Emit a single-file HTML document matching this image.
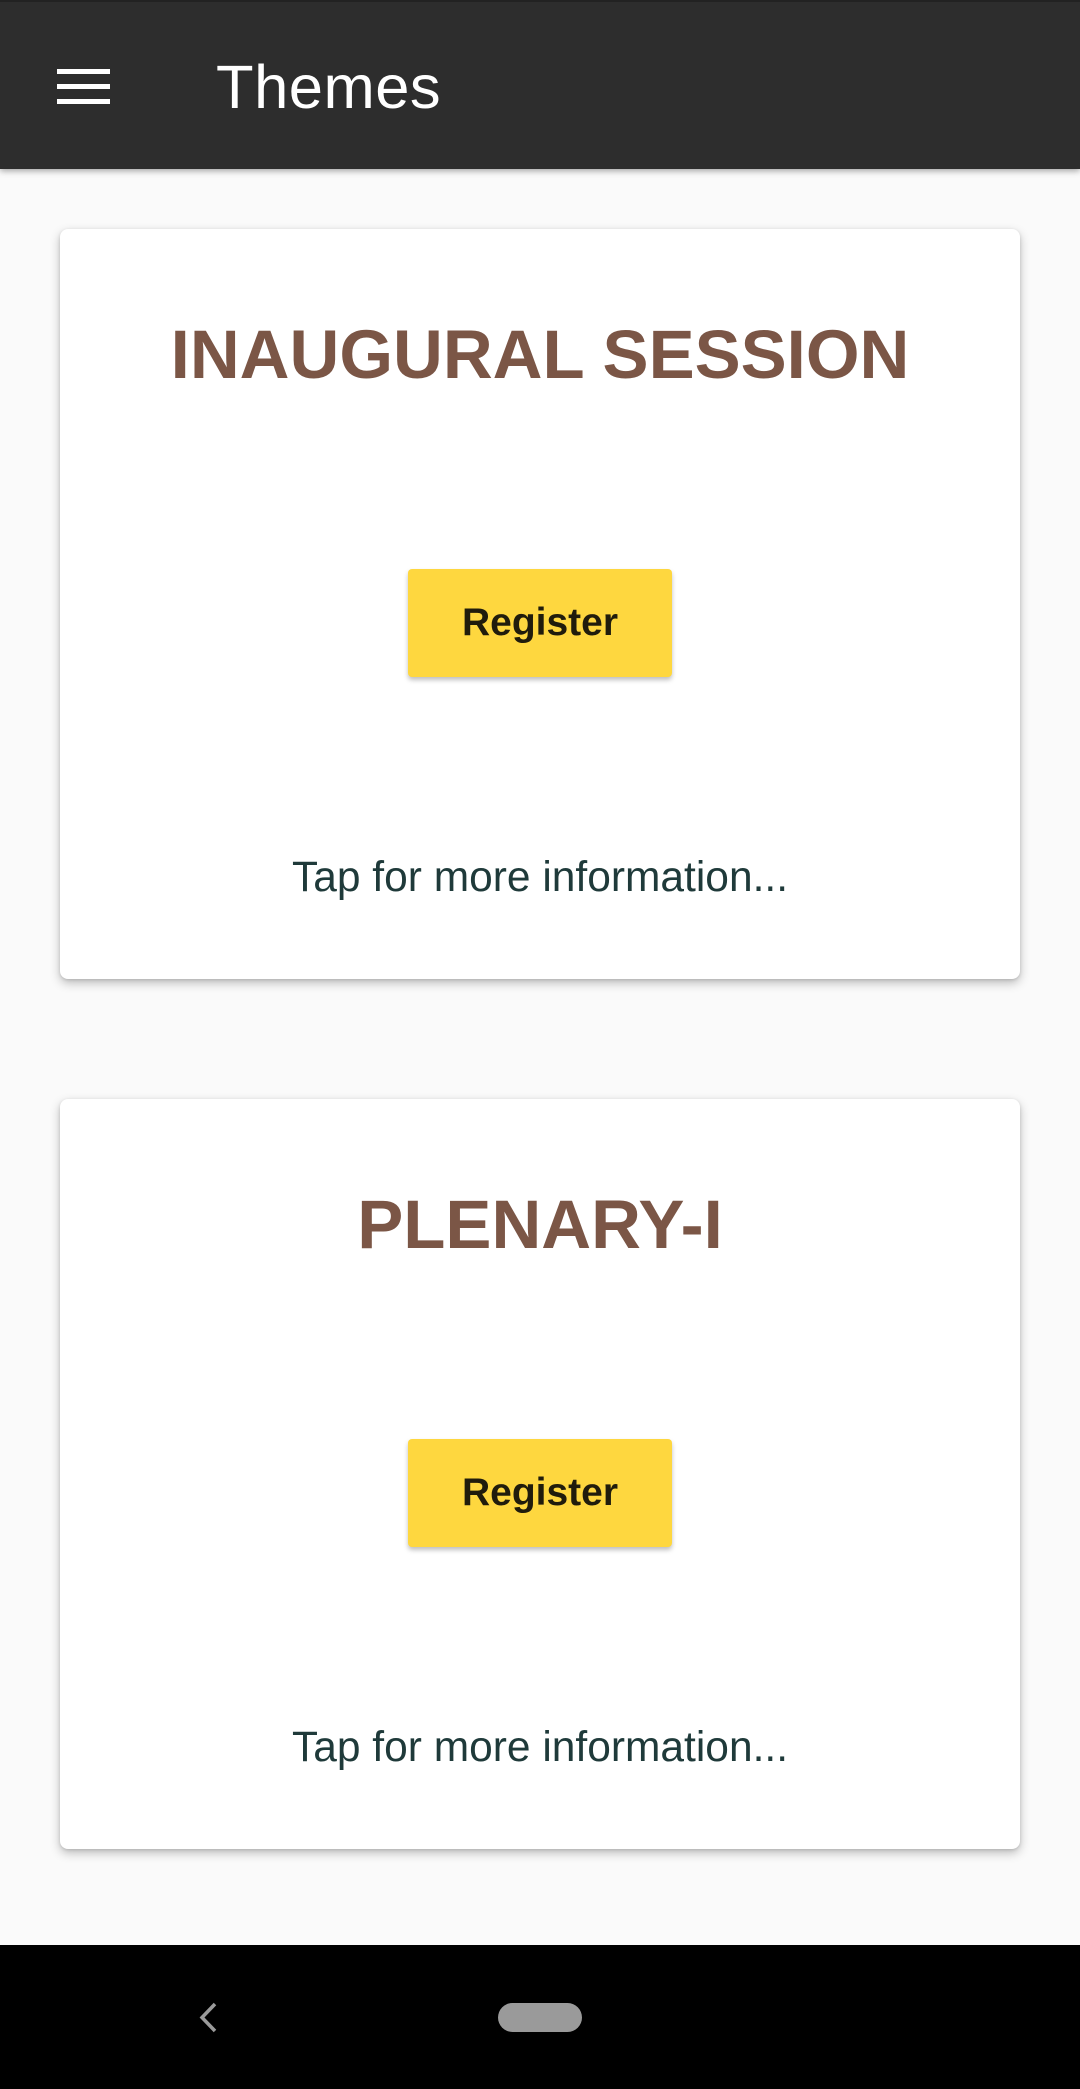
<!DOCTYPE html>
<html><head><meta charset="utf-8">
<style>
html,body{margin:0;padding:0;}
body{width:1080px;height:2089px;background:#fafafa;position:relative;overflow:hidden;font-family:"Liberation Sans",sans-serif;}
.bar{position:absolute;left:0;top:0;width:1080px;height:169px;background:#2d2d2d;box-shadow:0 2px 6px rgba(0,0,0,.35);border-top:2px solid #222;box-sizing:border-box;}
.ham{position:absolute;left:57px;width:53px;height:5px;background:#fff;}
.ttl{position:absolute;left:216px;top:50px;font-size:61.5px;color:#fff;line-height:72px;letter-spacing:0.5px;}
.card{position:absolute;left:60px;width:960px;background:#fff;border-radius:8px;box-shadow:0 4px 10px rgba(0,0,0,.25),0 1px 3px rgba(0,0,0,.12);}
.h{position:absolute;left:0;width:100%;text-align:center;font-weight:bold;color:#7b5646;font-size:69px;line-height:80px;}
.btn{position:absolute;left:348px;width:264px;height:108px;background:#fed73f;border-radius:4px;box-shadow:0 3px 5px rgba(0,0,0,.25);text-align:center;line-height:108px;font-size:39px;font-weight:bold;color:#201c0c;}
.tap{position:absolute;left:0;width:100%;text-align:center;font-size:42.5px;color:#1f3a3a;line-height:50px;}
.nav{position:absolute;left:0;top:1945px;width:1080px;height:144px;background:#000;}
.pill{position:absolute;left:498px;top:58px;width:84px;height:29px;border-radius:15px;background:#9a9a9a;}
</style></head><body>
<div class="bar">
<div class="ham" style="top:67px"></div>
<div class="ham" style="top:82px"></div>
<div class="ham" style="top:97px"></div>
<div class="ttl">Themes</div>
</div>

<div class="card" style="top:229px;height:750px;">
<div class="h" style="top:86px">INAUGURAL SESSION</div>
<div class="btn" style="top:340px">Register</div>
<div class="tap" style="top:624px">Tap for more information...</div>
</div>

<div class="card" style="top:1099px;height:750px;">
<div class="h" style="top:86px">PLENARY-I</div>
<div class="btn" style="top:340px">Register</div>
<div class="tap" style="top:624px">Tap for more information...</div>
</div>

<div class="nav">
<svg style="position:absolute;left:196px;top:56px" width="24" height="34" viewBox="0 0 24 34"><path d="M19 3 L6 16.5 L19 30" stroke="#9a9a9a" stroke-width="3.5" fill="none"/></svg>
<div class="pill"></div>
</div>
</body></html>
